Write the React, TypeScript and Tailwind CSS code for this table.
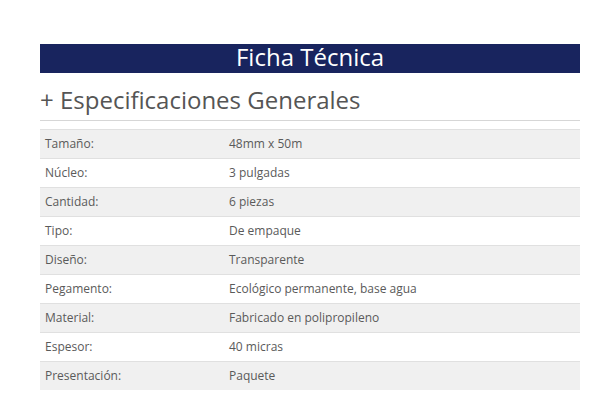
import React from "react";

const specs: [string, string][] = [
  ["Tamaño:", "48mm x 50m"],
  ["Núcleo:", "3 pulgadas"],
  ["Cantidad:", "6 piezas"],
  ["Tipo:", "De empaque"],
  ["Diseño:", "Transparente"],
  ["Pegamento:", "Ecológico permanente, base agua"],
  ["Material:", "Fabricado en polipropileno"],
  ["Espesor:", "40 micras"],
  ["Presentación:", "Paquete"],
];

const App = () => {
  return (
    <div className="min-h-screen bg-white font-['Open_Sans',sans-serif] pt-[44px] px-[40px]">
      <div className="w-[540px]">
        <div className="h-[29px] bg-[#18245e] flex items-center justify-center pb-[3px]">
          <h1 className="text-[24px] leading-none text-white">Ficha Técnica</h1>
        </div>
        <h2 className="mt-[12px] h-[36px] text-[24px] leading-[30px] text-[#555] border-b border-[#d6d6d6]">
          + Especificaciones Generales
        </h2>
        <div className="mt-[8px]">
          {specs.map(([label, value], i) => (
            <div
              key={label}
              className={`flex h-[29px] items-center border-t border-[#e0e0e0] text-[12px] text-[#5a5a5a] ${
                i % 2 === 0 ? "bg-[#f0f0f0]" : "bg-white"
              }`}
            >
              <div className="w-[184px] pl-[5px]">{label}</div>
              <div className="pl-[5px]">{value}</div>
            </div>
          ))}
        </div>
      </div>
    </div>
  );
};

export default App;
